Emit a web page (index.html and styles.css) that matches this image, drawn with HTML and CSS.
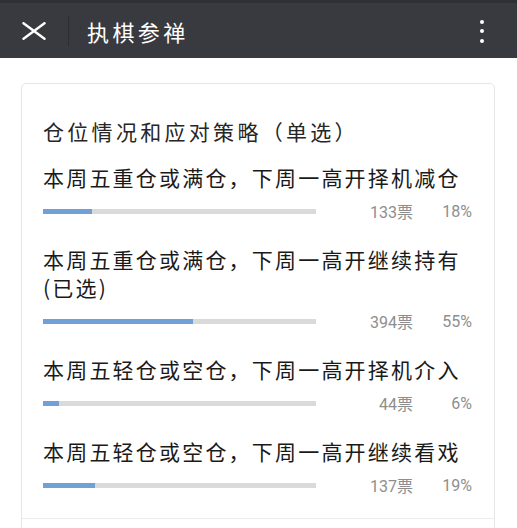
FILE: index.html
```html
<!DOCTYPE html>
<html lang="zh-CN">
<head>
<meta charset="utf-8">
<title>执棋参禅</title>
<link rel="stylesheet" href="styles.css">
</head>
<body>
<header class="topbar">
  <svg class="close" width="24" height="18" viewBox="0 0 24 18"><path d="M1.5 1.2 L22.5 16.8 M22.5 1.2 L1.5 16.8" stroke="#fff" stroke-width="2.4" stroke-linecap="round" fill="none"/></svg>
  <span class="sep"></span>
  <h1 class="title">执棋参禅</h1>
  <span class="more"><i></i><i></i><i></i></span>
</header>
<main class="card">
  <section class="poll">
    <h2 class="question">仓位情况和应对策略（单选）</h2>
    <div class="option">
      <p class="label">本周五重仓或满仓，下周一高开择机减仓</p>
      <div class="stats"><div class="bar"><div class="fill" style="width:18%"></div></div><span class="votes">133票</span><span class="pct">18%</span></div>
    </div>
    <div class="option">
      <p class="label">本周五重仓或满仓，下周一高开继续持有<br>(已选)</p>
      <div class="stats"><div class="bar"><div class="fill" style="width:55%"></div></div><span class="votes">394票</span><span class="pct">55%</span></div>
    </div>
    <div class="option">
      <p class="label">本周五轻仓或空仓，下周一高开择机介入</p>
      <div class="stats"><div class="bar"><div class="fill" style="width:6%"></div></div><span class="votes">44票</span><span class="pct">6%</span></div>
    </div>
    <div class="option">
      <p class="label">本周五轻仓或空仓，下周一高开继续看戏</p>
      <div class="stats"><div class="bar"><div class="fill" style="width:19%"></div></div><span class="votes">137票</span><span class="pct">19%</span></div>
    </div>
  </section>
  <footer class="card-foot"></footer>
</main>
</body>
</html>
```
FILE: styles.css
```css
* { box-sizing: border-box; }
html, body { margin: 0; padding: 0; }
body {
  background: #ffffff;
  font-family: "Noto Sans CJK SC", "Noto Sans", sans-serif;
  overflow: hidden;
}
.topbar {
  height: 58px;
  background: #393a3f;
  border-top: 3px solid #2f3034;
  display: flex;
  align-items: center;
  padding-left: 22px;
  padding-right: 33px;
}
.close { display: block; flex: none; margin-top: 1px; }
.sep {
  width: 1px;
  height: 30px;
  background: #2c2d31;
  margin-left: 22px;
}
.title {
  margin: 0 0 0 18px;
  font-size: 22px;
  font-weight: normal;
  letter-spacing: 3.4px;
  color: #ffffff;
  flex: 1;
  line-height: 30px;
}
.more {
  display: flex;
  flex-direction: column;
  gap: 5.5px;
  margin-top: 1px;
}
.more i {
  display: block;
  width: 4px;
  height: 4px;
  border-radius: 50%;
  background: #ffffff;
}
.card {
  margin: 25px 22px 0 21px;
  border: 1px solid #e6e6e6;
  border-radius: 5px;
  background: #fff;
}
.poll {
  padding: 32px 21px 23px 21px;
}
.question {
  margin: 0;
  font-size: 21px;
  font-weight: normal;
  letter-spacing: 3.3px;
  line-height: 30px;
  color: #262626;
}
.option { margin-top: 17px; }
.option + .option { margin-top: 24px; }
.label {
  margin: 0;
  font-size: 21px;
  letter-spacing: 2.2px;
  line-height: 28px;
  color: #1a1a1a;
}
.stats {
  margin-top: 10px;
  height: 20px;
  display: flex;
  align-items: center;
  font-family: Roboto, "Noto Sans CJK SC", sans-serif;
  font-size: 16px;
  color: #8e8e8e;
}
.bar {
  width: 273px;
  height: 5px;
  background: #dadada;
  flex: none;
}
.fill {
  height: 100%;
  background: #70a1d6;
}
.votes {
  width: 97px;
  text-align: right;
  flex: none;
}
.pct {
  width: 59px;
  text-align: right;
  flex: none;
}
.card-foot {
  height: 50px;
  border-top: 1px solid #ececec;
}
```
